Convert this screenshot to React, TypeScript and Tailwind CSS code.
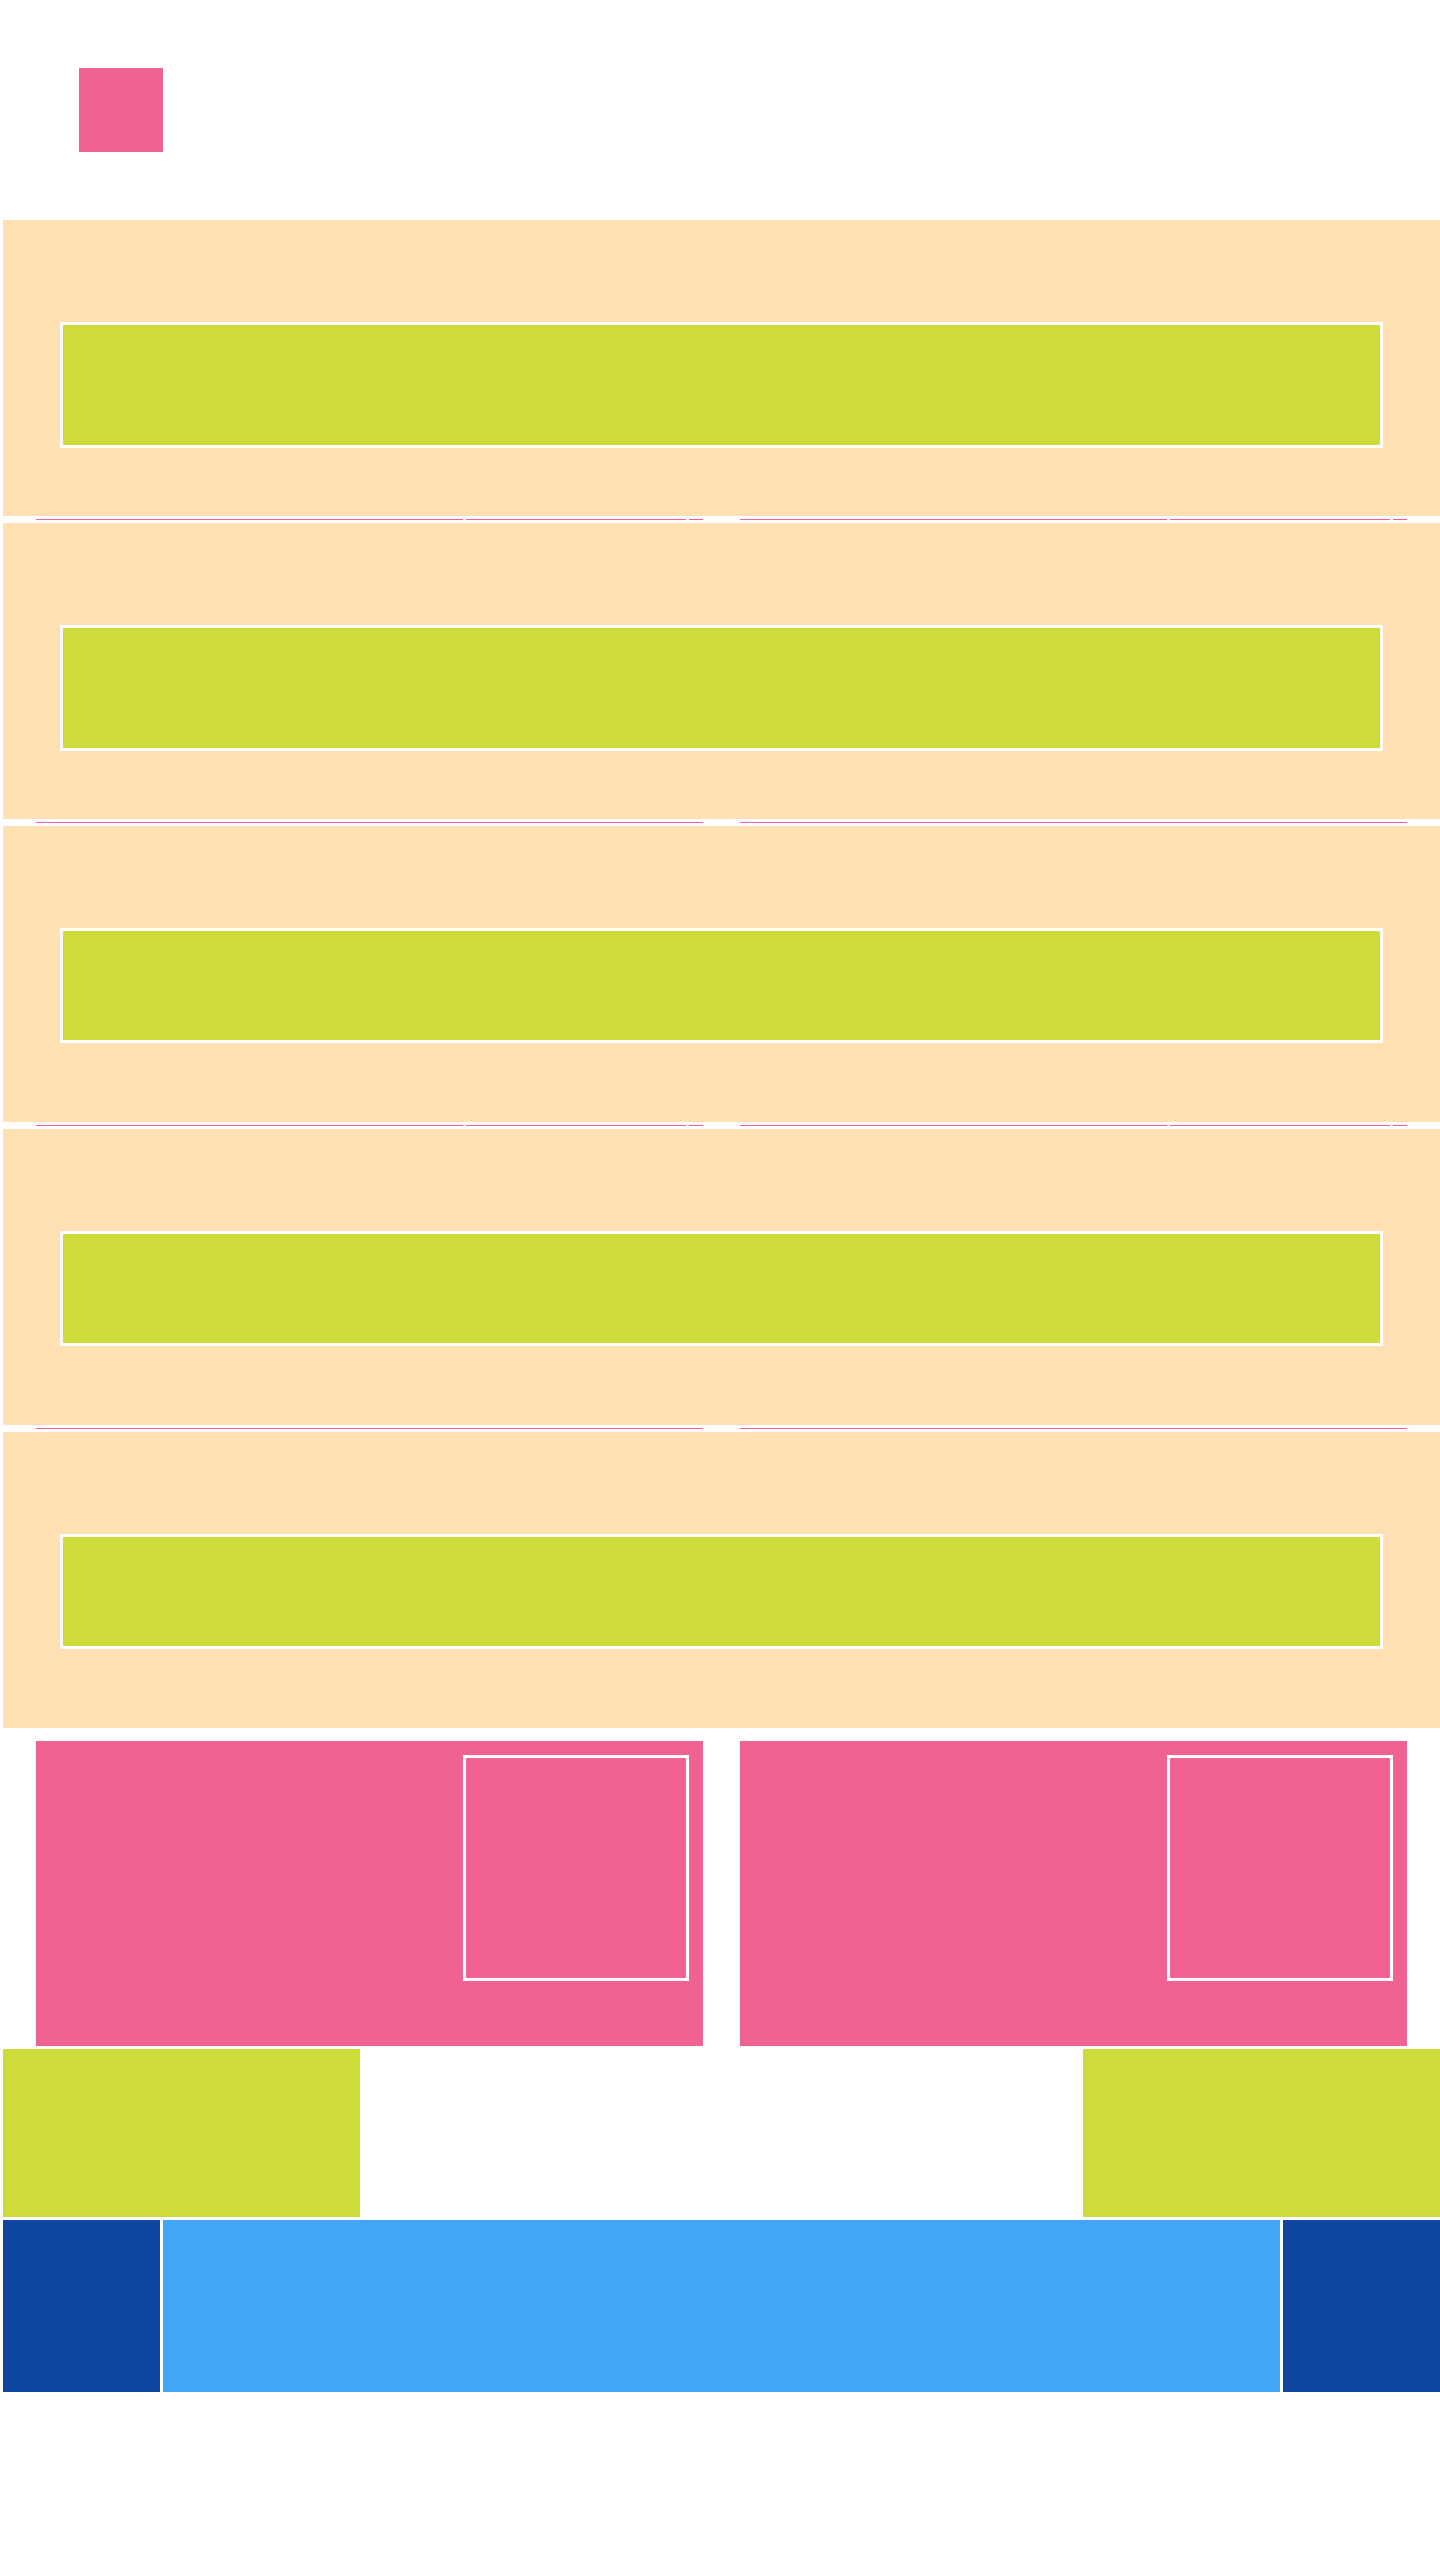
import React from "react";

const Seg = ({ w, pink }: { w: string; pink: boolean }) => (
  <div className={`${w} h-full ${pink ? "bg-[#F06292]" : "bg-white"}`} />
);

function GapSegmented() {
  return (
    <div className="h-[7px] bg-white pt-[3px]">
      <div className="flex h-[1px] pl-[36px]">
        <div className="w-[427px] bg-[#F06292]" />
        <div className="w-[3px] bg-white" />
        <div className="w-[220px] bg-[#F06292]" />
        <div className="w-[3px] bg-white" />
        <div className="w-[14px] bg-[#F06292]" />
        <div className="w-[37px] bg-white" />
        <div className="w-[427px] bg-[#F06292]" />
        <div className="w-[3px] bg-white" />
        <div className="w-[220px] bg-[#F06292]" />
        <div className="w-[3px] bg-white" />
        <div className="w-[14px] bg-[#F06292]" />
      </div>
    </div>
  );
}

function GapPlain() {
  return (
    <div className="h-[7px] bg-white pt-[3px]">
      <div className="flex h-[1px] pl-[36px] gap-[37px]">
        <div className="w-[667px] bg-[#F06292]" />
        <div className="w-[667px] bg-[#F06292]" />
      </div>
    </div>
  );
}

function Band({ tall }: { tall: boolean }) {
  return (
    <div className="ml-[3px] h-[296px] bg-[#FFE0B2] pt-[102px] pl-[57px]">
      <div
        className={`w-[1323px] ${tall ? "h-[126px]" : "h-[115px]"} border-[3px] border-white bg-[#CDDC39]`}
      />
    </div>
  );
}

function Card() {
  return (
    <div className="w-[667px] h-[305px] bg-[#F06292] pt-[14px] pl-[427px]">
      <div className="w-[226px] h-[226px] border-[3px] border-white" />
    </div>
  );
}

export default function App() {
  void Seg;
  return (
    <div className="w-[1440px] min-h-[2560px] bg-white">
      <div className="h-[220px] pt-[68px] pl-[79px]">
        <div className="w-[84px] h-[84px] bg-[#F06292]" />
      </div>
      <Band tall />
      <GapSegmented />
      <Band tall />
      <GapPlain />
      <Band tall={false} />
      <GapSegmented />
      <Band tall={false} />
      <GapPlain />
      <Band tall={false} />
      <div className="flex gap-[37px] pl-[36px] pt-[13px]">
        <Card />
        <Card />
      </div>
      <div className="flex justify-between pl-[3px] pt-[3px]">
        <div className="w-[357px] h-[168px] bg-[#CDDC39]" />
        <div className="w-[357px] h-[168px] bg-[#CDDC39]" />
      </div>
      <div className="flex gap-[3px] pl-[3px] pt-[3px]">
        <div className="w-[157px] h-[172px] bg-[#0D47A1]" />
        <div className="w-[1117px] h-[172px] bg-[#42A5F5]" />
        <div className="w-[157px] h-[172px] bg-[#0D47A1]" />
      </div>
    </div>
  );
}
